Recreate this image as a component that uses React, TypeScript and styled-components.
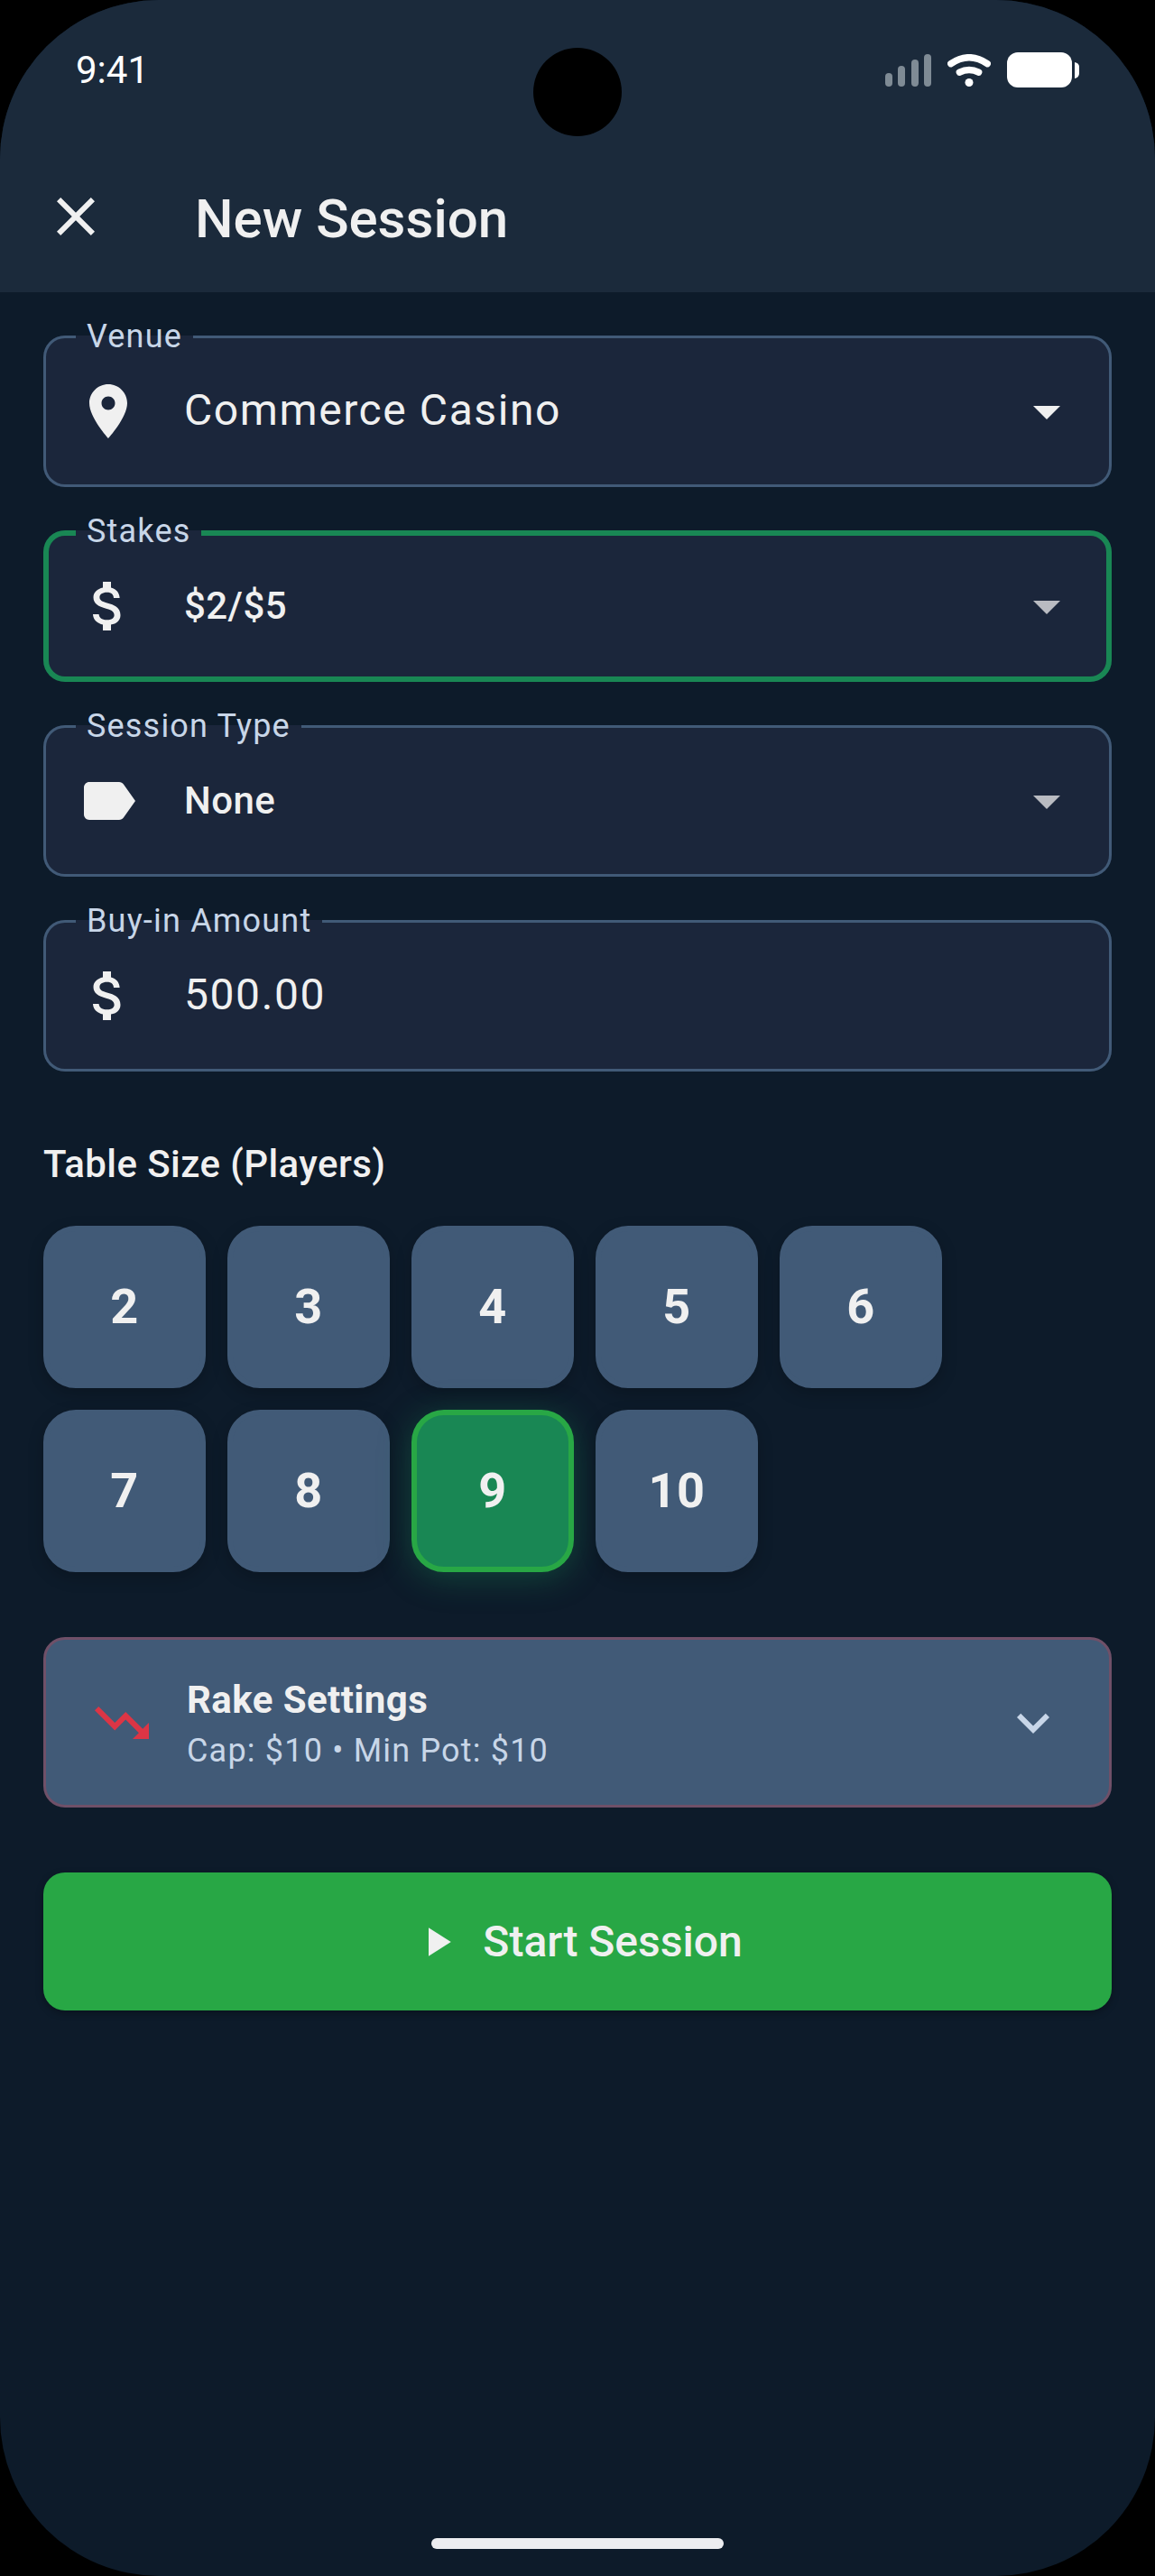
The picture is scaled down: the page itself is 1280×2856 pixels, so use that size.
import { useState } from 'react';
import type { ReactNode } from 'react';
import styled, { createGlobalStyle, css } from 'styled-components';

const color = {
  page: '#0d1b2a',
  bar: '#1b2a3b',
  field: '#1b263b',
  slate: '#415a77',
  text: '#f0f0f0',
  muted: '#c8d6e8',
  focus: '#198754',
  success: '#28a745',
  danger: '#dc3545',
};

const tracking = {
  body: '0.033em',
  title: '0.01em',
};

const GlobalStyle = createGlobalStyle`
  *, *::before, *::after { box-sizing: border-box; }
  body { margin: 0; background: #000; }
  body, button, input, select {
    font-family: Roboto, "Liberation Sans", sans-serif;
  }
`;

const Screen = styled.div`
  display: flex;
  flex-direction: column;
  min-height: 100vh;
  border-radius: 176px;
  overflow: hidden;
  background: ${color.page};
  color: ${color.text};
`;

const TopArea = styled.header`
  position: relative;
  background: ${color.bar};
`;

const Camera = styled.div`
  position: absolute;
  top: 53px;
  left: 50%;
  width: 98px;
  height: 98px;
  border-radius: 50%;
  background: #000;
  transform: translateX(-50%);
`;

const StatusBar = styled.div`
  display: flex;
  align-items: center;
  justify-content: space-between;
  height: 156px;
  padding: 0 84px;
  color: #fff;
`;

const Clock = styled.span`
  padding-bottom: 2px;
  font-size: 42px;
`;

const StatusIcons = styled.div`
  display: flex;
  align-items: center;
  gap: 18px;
`;

const Toolbar = styled.div`
  display: flex;
  align-items: center;
  gap: 96px;
  height: 168px;
  padding: 0 48px;
`;

const IconButton = styled.button`
  display: flex;
  padding: 0;
  border: 0;
  background: none;
  color: inherit;
  cursor: pointer;
`;

const Title = styled.h1`
  margin: 0;
  padding-top: 4px;
  font-size: 60px;
  font-weight: 500;
`;

const Form = styled.form`
  display: flex;
  flex-direction: column;
  gap: 72px;
  padding: 48px;
`;

const Fields = styled.div`
  display: flex;
  flex-direction: column;
  gap: 48px;
`;

const Field = styled.div<{ $active?: boolean }>`
  position: relative;
  display: flex;
  align-items: center;
  gap: 48px;
  height: 168px;
  padding: 0 36px;
  border-radius: 24px;
  background: ${color.field};
  box-shadow: inset 0 0 0
    ${({ $active }) => ($active ? `6px ${color.focus}` : `3px ${color.slate}`)};
`;

/* The strip behind the label opens a gap in the outline. */
const FieldLabel = styled.label`
  position: absolute;
  top: -23px;
  left: 36px;
  padding: 0 12px;
  background: linear-gradient(${color.field}, ${color.field}) 0 23px / 100% 6px no-repeat;
  color: ${color.muted};
  font-size: 36px;
  line-height: 48px;
  letter-spacing: ${tracking.body};
`;

const control = css<{ $compact?: boolean }>`
  flex: 1;
  min-width: 0;
  height: 100%;
  padding: 0 0 4px;
  border: 0;
  outline: 0;
  background: none;
  color: ${color.text};
  font-size: 48px;
  letter-spacing: ${tracking.body};
  ${({ $compact }) =>
    $compact &&
    css`
      padding-bottom: 2px;
      font-size: 42px;
      font-weight: 500;
      letter-spacing: ${tracking.title};
    `}
`;

const Select = styled.select<{ $compact?: boolean }>`
  ${control}
  appearance: none;
  cursor: pointer;
`;

const Input = styled.input<{ $compact?: boolean }>`
  ${control}
`;

const Caret = styled.span<{ $dim?: boolean }>`
  display: flex;
  margin-left: -120px;
  opacity: ${({ $dim }) => ($dim ? 0.74 : 1)};
  pointer-events: none;
`;

const SizeGroup = styled.fieldset`
  min-width: 0;
  margin: 0;
  padding: 0;
  border: 0;
`;

const SizeTitle = styled.legend`
  margin-bottom: 38px;
  padding: 0;
  font-size: 42px;
  font-weight: 500;
  line-height: 61px;
  letter-spacing: ${tracking.title};
`;

const SizeGrid = styled.div`
  display: flex;
  flex-wrap: wrap;
  gap: 24px;
`;

const SizeTile = styled.label<{ $selected: boolean }>`
  display: flex;
  align-items: center;
  justify-content: center;
  width: 180px;
  height: 180px;
  padding-bottom: 2px;
  border: 6px solid ${({ $selected }) => ($selected ? color.success : color.slate)};
  border-radius: 36px;
  background: ${({ $selected }) => ($selected ? color.focus : color.slate)};
  box-shadow: ${({ $selected }) =>
    $selected ? '0 6px 36px rgba(25, 135, 84, 0.4)' : '0 6px 18px rgba(0, 0, 0, 0.2)'};
  font-size: 54px;
  font-weight: 700;
  letter-spacing: ${tracking.title};
  cursor: pointer;
`;

const SizeRadio = styled.input`
  position: absolute;
  width: 1px;
  height: 1px;
  margin: 0;
  opacity: 0;
`;

const RakeCard = styled.button`
  display: flex;
  align-items: center;
  gap: 36px;
  padding: 36px 48px;
  border: 3px solid #6f5068;
  border-radius: 24px;
  background: ${color.slate};
  color: ${color.text};
  text-align: left;
  cursor: pointer;
`;

const RakeText = styled.span`
  display: flex;
  flex: 1;
  flex-direction: column;
`;

const RakeTitle = styled.span`
  font-size: 42px;
  font-weight: 700;
  line-height: 61px;
  letter-spacing: ${tracking.title};
`;

const RakeSummary = styled.span`
  padding-top: 2px;
  color: ${color.muted};
  font-size: 36px;
  line-height: 48px;
  letter-spacing: ${tracking.body};
`;

const Tint = styled.span<{ $color: string }>`
  display: flex;
  color: ${({ $color }) => $color};
`;

const StartButton = styled.button`
  display: flex;
  align-items: center;
  justify-content: center;
  gap: 24px;
  padding: 48px;
  border: 0;
  border-radius: 24px;
  background: ${color.success};
  box-shadow: 0 3px 9px rgba(0, 0, 0, 0.3);
  color: ${color.text};
  font-size: 48px;
  font-weight: 500;
  line-height: 57px;
  cursor: pointer;
`;

const HomeIndicator = styled.div`
  align-self: center;
  width: 324px;
  height: 12px;
  margin-top: auto;
  margin-bottom: 30px;
  border-radius: 6px;
  background: #ecedf0;
`;

const paths = {
  close:
    'M19 6.41L17.59 5 12 10.59 6.41 5 5 6.41 10.59 12 5 17.59 6.41 19 12 13.41 17.59 19 19 17.59 13.41 12z',
  place:
    'M12 2C8.13 2 5 5.13 5 9c0 5.25 7 13 7 13s7-7.75 7-13c0-3.87-3.13-7-7-7zm0 9.5c-1.38 0-2.5-1.12-2.5-2.5s1.12-2.5 2.5-2.5 2.5 1.12 2.5 2.5-1.12 2.5-2.5 2.5z',
  money:
    'M11.8 10.9c-2.27-.59-3-1.2-3-2.15 0-1.09 1.01-1.85 2.7-1.85 1.78 0 2.44.85 2.5 2.1h2.21c-.07-1.72-1.12-3.3-3.21-3.81V3h-3v2.16c-1.94.42-3.5 1.68-3.5 3.61 0 2.31 1.91 3.46 4.7 4.13 2.5.6 3 1.48 3 2.41 0 .69-.49 1.79-2.7 1.79-2.06 0-2.87-.92-2.98-2.1h-2.2c.12 2.19 1.76 3.42 3.68 3.83V21h3v-2.15c1.95-.37 3.5-1.5 3.5-3.55 0-2.84-2.43-3.81-4.7-4.4z',
  label:
    'M17.63 5.84C17.27 5.33 16.67 5 16 5L5 5.01C3.9 5.01 3 5.9 3 7v10c0 1.1.9 1.99 2 1.99L16 19c.67 0 1.27-.33 1.63-.84L22 12l-4.37-6.16z',
  caret: 'M7 10l5 5 5-5z',
  trendingDown: 'M16 18l2.29-2.29-4.88-4.88-4 4L2 7.41 3.41 6l6 6 4-4 6.3 6.29L22 12v6z',
  expand: 'M16.59 8.59L12 13.17 7.41 8.59 6 10l6 6 6-6z',
  play: 'M8 5v14l11-7z',
};

type IconProps = { name: keyof typeof paths; size?: number };

function Icon({ name, size = 72 }: IconProps) {
  return (
    <svg width={size} height={size} viewBox="0 0 24 24" fill="currentColor" aria-hidden="true">
      <path d={paths[name]} />
    </svg>
  );
}

function SignalIcon() {
  return (
    <svg width="51" height="36" viewBox="0 0 51 36" fill="#7f8b95" aria-hidden="true">
      <rect x="0" y="21" width="8" height="15" rx="4" />
      <rect x="14" y="13" width="8" height="23" rx="4" />
      <rect x="29" y="6" width="8" height="30" rx="4" />
      <rect x="43" y="0" width="8" height="36" rx="4" />
    </svg>
  );
}

function WifiIcon() {
  return (
    <svg width="48" height="36" viewBox="0 0 48 36" fill="none" aria-hidden="true">
      <g stroke="#fff" strokeWidth="7.5" strokeLinecap="round">
        <path d="M3.8 10.6Q24 -3.1 44.2 10.6" />
        <path d="M13.4 20.1Q24 14.9 34.6 20.1" />
      </g>
      <circle cx="24" cy="31.5" r="4.5" fill="#fff" />
    </svg>
  );
}

function BatteryIcon() {
  return (
    <svg width="80" height="40" viewBox="0 0 80 40" fill="#fff" aria-hidden="true">
      <rect x="0" y="0" width="72" height="39" rx="12" />
      <path d="M75 11q5 1 5 5v7q0 5-5 6z" />
    </svg>
  );
}

type DropdownProps = {
  id: string;
  label: string;
  icon: ReactNode;
  options: string[];
  active?: boolean;
  compact?: boolean;
};

function Dropdown({ id, label, icon, options, active, compact }: DropdownProps) {
  return (
    <Field $active={active}>
      <FieldLabel htmlFor={id}>{label}</FieldLabel>
      {icon}
      <Select id={id} $compact={compact} defaultValue={options[0]}>
        {options.map((option) => (
          <option key={option}>{option}</option>
        ))}
      </Select>
      <Caret $dim={compact}>
        <Icon name="caret" />
      </Caret>
    </Field>
  );
}

const sizes = [2, 3, 4, 5, 6, 7, 8, 9, 10];

export default function App() {
  const [players, setPlayers] = useState(9);

  return (
    <>
      <GlobalStyle />
      <Screen>
        <TopArea>
          <Camera />
          <StatusBar>
            <Clock>9:41</Clock>
            <StatusIcons>
              <SignalIcon />
              <WifiIcon />
              <BatteryIcon />
            </StatusIcons>
          </StatusBar>
          <Toolbar>
            <IconButton type="button" aria-label="Close">
              <Icon name="close" />
            </IconButton>
            <Title>New Session</Title>
          </Toolbar>
        </TopArea>

        <Form onSubmit={(event) => event.preventDefault()}>
          <Fields>
            <Dropdown
              id="venue"
              label="Venue"
              icon={<Icon name="place" />}
              options={['Commerce Casino']}
            />
            <Dropdown
              id="stakes"
              label="Stakes"
              icon={<Icon name="money" />}
              options={['$2/$5']}
              active
              compact
            />
            <Dropdown
              id="session-type"
              label="Session Type"
              icon={<Icon name="label" />}
              options={['None']}
              compact
            />
            <Field>
              <FieldLabel htmlFor="buy-in">Buy-in Amount</FieldLabel>
              <Icon name="money" />
              <Input id="buy-in" inputMode="decimal" defaultValue="500.00" />
            </Field>
          </Fields>

          <SizeGroup>
            <SizeTitle>Table Size (Players)</SizeTitle>
            <SizeGrid>
              {sizes.map((size) => (
                <SizeTile key={size} $selected={size === players}>
                  <SizeRadio
                    type="radio"
                    name="players"
                    value={size}
                    checked={size === players}
                    onChange={() => setPlayers(size)}
                  />
                  {size}
                </SizeTile>
              ))}
            </SizeGrid>
          </SizeGroup>

          <RakeCard type="button" aria-expanded="false">
            <Tint $color={color.danger}>
              <Icon name="trendingDown" />
            </Tint>
            <RakeText>
              <RakeTitle>Rake Settings</RakeTitle>
              <RakeSummary>Cap: $10 • Min Pot: $10</RakeSummary>
            </RakeText>
            <Tint $color={color.muted}>
              <Icon name="expand" />
            </Tint>
          </RakeCard>

          <StartButton type="submit">
            <Icon name="play" size={54} />
            Start Session
          </StartButton>
        </Form>

        <HomeIndicator />
      </Screen>
    </>
  );
}
